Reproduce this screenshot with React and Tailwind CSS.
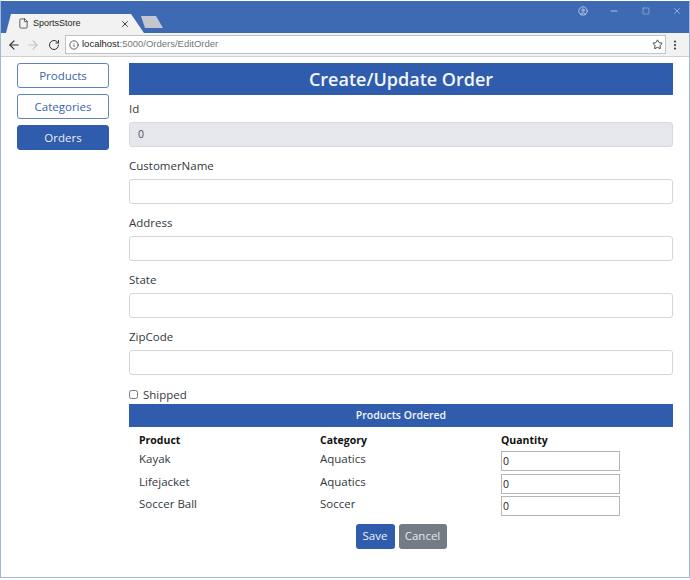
import React from 'react';
import { ArrowLeft, ArrowRight, RotateCw, Star, Info, File, X, Minus, Square, CircleUser, EllipsisVertical } from 'lucide-react';

const NAV = [
  { label: 'Products', active: false },
  { label: 'Categories', active: false },
  { label: 'Orders', active: true },
];

const FIELDS = ['CustomerName', 'Address', 'State', 'ZipCode'];

const ITEMS = [
  { name: 'Kayak', category: 'Aquatics' },
  { name: 'Lifejacket', category: 'Aquatics' },
  { name: 'Soccer Ball', category: 'Soccer' },
];

const App = () => {
  return (
    <div className="w-[690px] h-[580px] bg-white font-['Open_Sans',sans-serif] text-[11.5px] text-[#33383d] overflow-hidden">
      <div className="h-[578px] border border-[#9dbbd8] border-t-white flex flex-col">
        {/* title bar */}
        <div className="h-[32px] bg-[#3e6ab3] flex items-end justify-between pl-[5px] shrink-0">
          <div className="flex items-end">
            <div className="w-[138px] h-[19px] bg-[#f2f2f2] [clip-path:polygon(0_100%,5px_0,125px_0,100%_100%)] flex items-center pl-[12px] pr-[14px] text-[9px] text-[#222] font-['Liberation_Sans',sans-serif]">
              <File size={11} strokeWidth={1.5} className="shrink-0" />
              <span className="ml-[4px] flex-1">SportsStore</span>
              <X size={10} strokeWidth={2} />
            </div>
            <div className="w-[22px] h-[12px] mb-[5px] -ml-[3px] bg-[#c3c6cc] [clip-path:polygon(4px_100%,0_0,15px_0,100%_100%)]" />
          </div>
          <div className="self-start mt-[5px] flex items-center text-[#c6d4ea]">
            <CircleUser size={10} strokeWidth={2} />
            <Minus size={10} strokeWidth={2} className="ml-[21px]" />
            <Square size={8} strokeWidth={1.5} className="ml-[23px]" />
            <X size={10} strokeWidth={1.5} className="ml-[22px] mr-[7px]" />
          </div>
        </div>
        {/* toolbar */}
        <div className="h-[24px] bg-[#f2f2f2] border-b border-[#d0d0d0] flex items-center pl-[6px] pr-[8px] shrink-0">
          <ArrowLeft size={14} strokeWidth={2} className="text-[#333]" />
          <ArrowRight size={14} strokeWidth={2} className="ml-[5px] text-[#c4c4c4]" />
          <RotateCw size={12} strokeWidth={2} className="ml-[8px] text-[#333]" />
          <div className="ml-[5px] flex-1 h-[19px] bg-white border border-[#c2c2c2] flex items-center pl-[3px] pr-[2px] font-['Liberation_Sans',sans-serif] text-[9.5px] text-[#777]">
            <Info size={10} strokeWidth={2} className="text-[#444]" />
            <span className="ml-[3px]"><span className="text-[#222]">localhost</span>:5000/Orders/EditOrder</span>
            <Star size={11} strokeWidth={2} className="ml-auto text-[#333]" />
          </div>
          <EllipsisVertical size={12} strokeWidth={2.5} className="ml-[3px] text-[#444]" />
        </div>
        {/* page */}
        <div className="flex pl-[16px] pr-[16px] pt-[6px]">
          <div className="w-[92px] flex flex-col gap-[6px] shrink-0">
            {NAV.map((item) => (
              <button
                key={item.label}
                className={item.active
                  ? 'h-[25px] rounded-[3px] border border-[#2f5cac] bg-[#2f5cac] text-[#e8eef8]'
                  : 'h-[25px] rounded-[3px] border border-[#5f83c2] bg-white text-[#3a65b0]'}
              >
                {item.label}
              </button>
            ))}
          </div>
          <div className="ml-[20px] flex-1 min-w-0">
            <div className="h-[32px] bg-[#2f5cac] flex items-center justify-center text-[#f3f6fb] text-[18px] font-semibold">
              Create/Update Order
            </div>
            <div className="mt-[6px] h-[21px] leading-[16px]">Id</div>
            <div className="h-[25px] rounded-[3px] border border-[#d7d9dd] bg-[#e6e7ed] flex items-center pl-[8px] text-[#495057] text-[10.5px]">0</div>
            {FIELDS.map((field) => (
              <div key={field}>
                <div className="mt-[11px] h-[21px] leading-[16px]">{field}</div>
                <input className="block w-full h-[25px] rounded-[3px] border border-[#d4d6da] bg-white" />
              </div>
            ))}
            <label className="mt-[10px] h-[19px] flex items-center">
              <input type="checkbox" className="w-[9px] h-[9px] accent-[#888]" />
              <span className="ml-[5px]">Shipped</span>
            </label>
            <div className="h-[23px] bg-[#2f5cac] flex items-center justify-center text-[#f3f6fb] text-[10.5px] font-semibold">
              Products Ordered
            </div>
            <table className="mt-[4px] w-full table-fixed">
              <thead>
                <tr className="h-[20px] text-[#111] font-bold text-[10.5px] text-left">
                  <th className="w-[191px] pl-[10px]">Product</th>
                  <th className="w-[181px]">Category</th>
                  <th>Quantity</th>
                </tr>
              </thead>
              <tbody>
                {ITEMS.map((item) => (
                  <tr key={item.name} className="h-[22.5px] align-top">
                    <td className="pl-[10px] leading-[16px]">{item.name}</td>
                    <td className="leading-[16px]">{item.category}</td>
                    <td>
                      <input
                        readOnly
                        value="0"
                        className="block w-[119px] h-[20px] border border-[#b5b5b5] bg-white pl-[1px] text-[10.5px] text-[#222]"
                      />
                    </td>
                  </tr>
                ))}
              </tbody>
            </table>
            <div className="mt-[5px] flex justify-center gap-[4px]">
              <button className="w-[39px] h-[25px] rounded-[3px] bg-[#2f5cac] text-[#eef2f9]">Save</button>
              <button className="w-[48px] h-[25px] rounded-[3px] bg-[#737b85] text-[#e6e8ea]">Cancel</button>
            </div>
          </div>
        </div>
      </div>
    </div>
  );
};

export default App;
